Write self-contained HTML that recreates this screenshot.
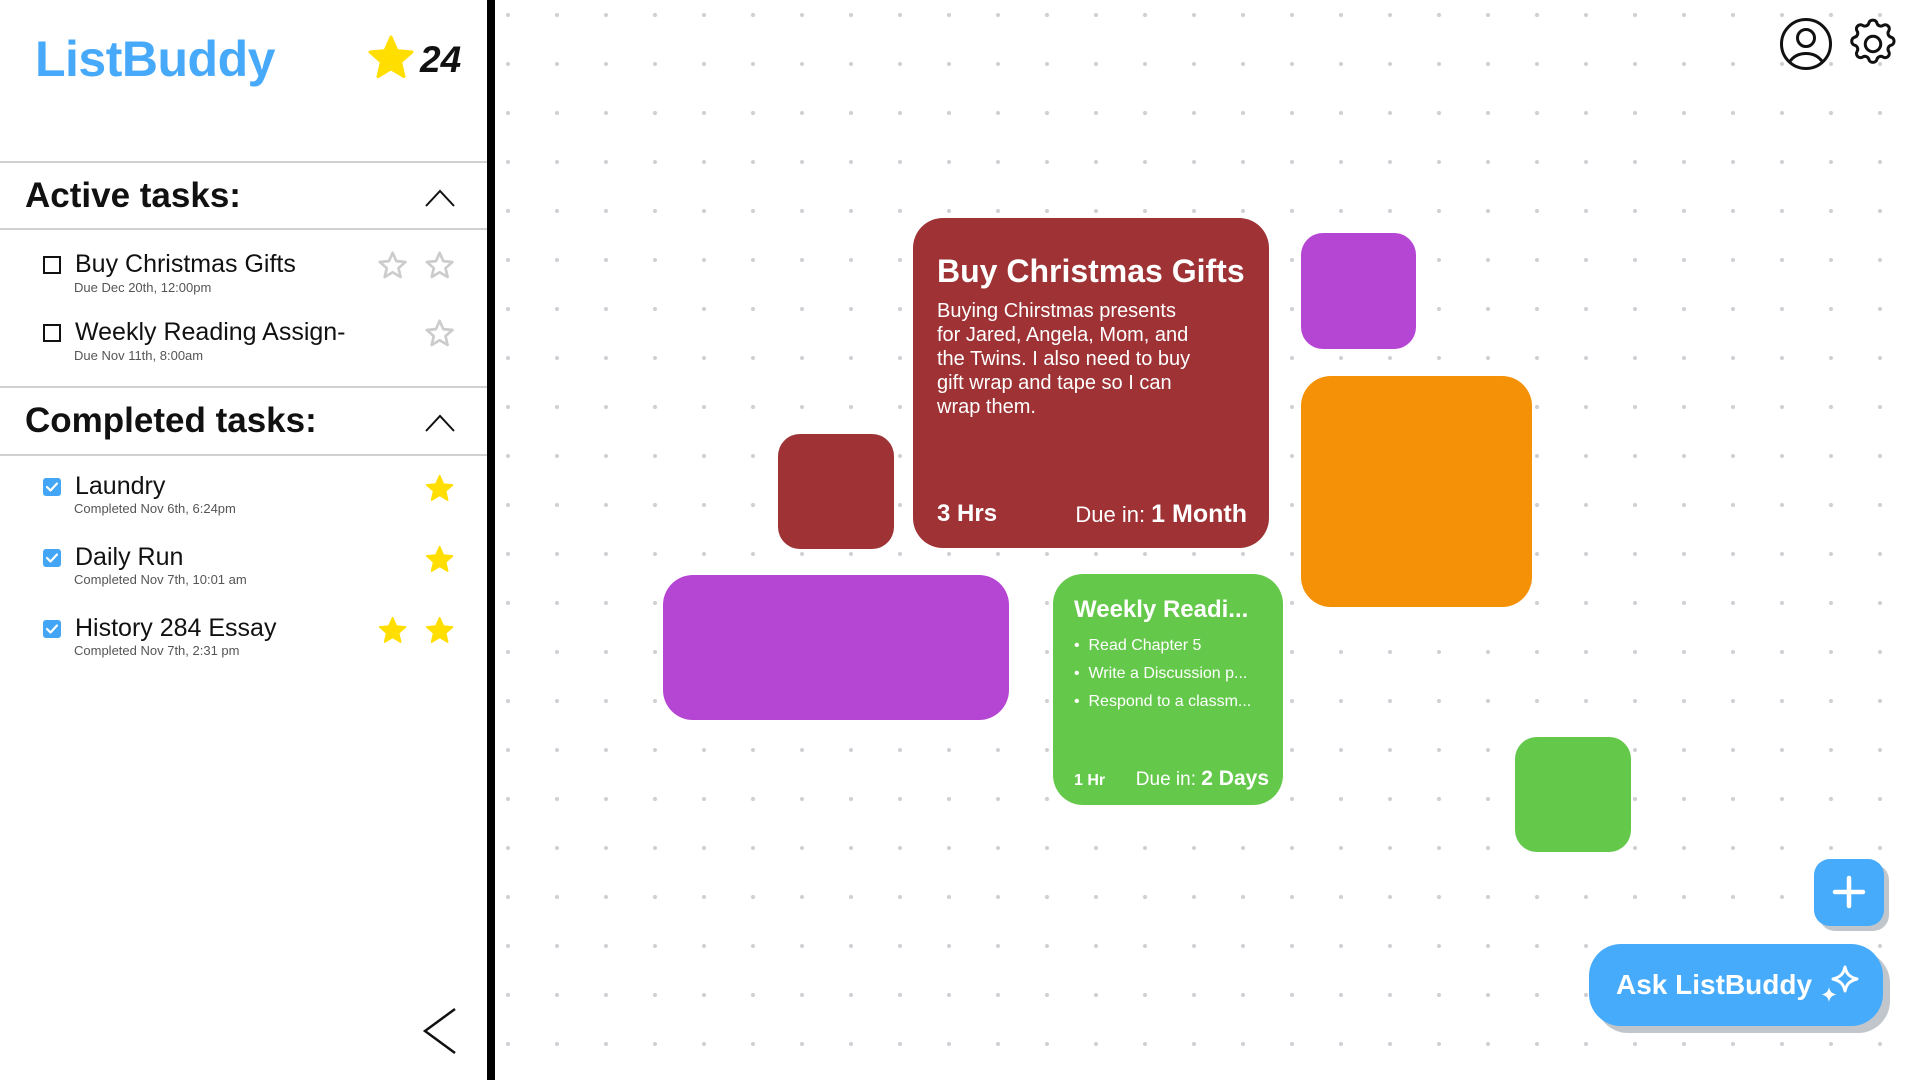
<!DOCTYPE html>
<html><head><meta charset="utf-8"><style>
*{margin:0;padding:0;box-sizing:border-box}
body{width:1920px;height:1080px;overflow:hidden;position:relative;font-family:"Liberation Sans",sans-serif;background:#fff;
background-image:radial-gradient(circle at 24.5px 24.5px,#cfd0d4 1.8px,transparent 2.3px);background-size:49px 49px;background-position:-6.5px -9.5px}
.a{position:absolute;white-space:nowrap}
#side{position:absolute;left:0;top:0;width:487px;height:1080px;background:#fff}
#bar{position:absolute;left:487px;top:0;width:8px;height:1080px;background:#000}
.hl{position:absolute;left:0;width:487px;height:2px;background:#d0d0d0}
.t{font-size:25px;line-height:25px;color:#111}
.s{font-size:13px;line-height:13px;color:#555}
.h{font-size:35px;line-height:35px;font-weight:bold;color:#111}
.cb{position:absolute;width:18px;height:18px;border:2.5px solid #111}
.cc{position:absolute;width:18px;height:18px;border-radius:3px;background:#42a5f5}
.card{position:absolute;border-radius:30px}
</style></head><body>
<div id="side">
<div class="a" style="left:35px;top:34px;font-size:50px;line-height:50px;font-weight:bold;color:#47a9fa;letter-spacing:-0.5px">ListBuddy</div>
<svg class="a" style="left:366px;top:34px" width="50" height="46" viewBox="0 0 24 23"><polygon points="12,1.5 15,8.3 22.5,9 16.8,14 18.5,21.3 12,17.4 5.5,21.3 7.2,14 1.5,9 9,8.3" fill="#ffde00" stroke="#ffde00" stroke-width="1.5" stroke-linejoin="round"/></svg>
<div class="a" style="left:420px;top:41px;font-size:37px;line-height:37px;font-style:italic;font-weight:bold;color:#111">24</div>
<div class="hl" style="top:161px"></div>
<div class="a h" style="left:25px;top:178px">Active tasks:</div>
<svg class="a" style="left:424px;top:188px" width="32" height="20"><polyline points="2,18 16,3 30,18" fill="none" stroke="#111" stroke-width="2"/></svg>
<div class="hl" style="top:228px"></div>
<div class="cb" style="left:43px;top:256px"></div>
<div class="a t" style="left:75px;top:252px">Buy Christmas Gifts</div>
<div class="a s" style="left:74px;top:281px">Due Dec 20th, 12:00pm</div>
<div class="cb" style="left:43px;top:324px"></div>
<div class="a t" style="left:75px;top:320px">Weekly Reading Assign-</div>
<div class="a s" style="left:74px;top:349px">Due Nov 11th, 8:00am</div>
<div class="hl" style="top:386px"></div>
<div class="a h" style="left:25px;top:403px">Completed tasks:</div>
<svg class="a" style="left:424px;top:413px" width="32" height="20"><polyline points="2,18 16,3 30,18" fill="none" stroke="#111" stroke-width="2"/></svg>
<div class="hl" style="top:454px"></div>
<div class="cc" style="left:43px;top:478px"></div>
<div class="a t" style="left:75px;top:474px">Laundry</div>
<div class="a s" style="left:74px;top:502px">Completed Nov 6th, 6:24pm</div>
<div class="cc" style="left:43px;top:549px"></div>
<div class="a t" style="left:75px;top:545px">Daily Run</div>
<div class="a s" style="left:74px;top:573px">Completed Nov 7th, 10:01 am</div>
<div class="cc" style="left:43px;top:620px"></div>
<div class="a t" style="left:75px;top:616px">History 284 Essay</div>
<div class="a s" style="left:74px;top:644px">Completed Nov 7th, 2:31 pm</div>
<svg class="a" style="left:0;top:0" width="487" height="1080">
<defs>
<polygon id="st" points="12,1.5 15,8.3 22.5,9 16.8,14 18.5,21.3 12,17.4 5.5,21.3 7.2,14 1.5,9 9,8.3" stroke-linejoin="round"/>
<polyline id="ck" points="4,9 7.5,12.5 14,5.5" fill="none" stroke="#fff" stroke-width="2.2" stroke-linecap="round" stroke-linejoin="round"/>
</defs>
<g fill="none" stroke="#ccc" stroke-width="2.2">
<use href="#st" transform="translate(378,251) scale(1.22)"/>
<use href="#st" transform="translate(425,251) scale(1.22)"/>
<use href="#st" transform="translate(425,319) scale(1.22)"/>
</g>
<g fill="#ffde00" stroke="#ffde00" stroke-width="1.5">
<use href="#st" transform="translate(425,474) scale(1.22)"/>
<use href="#st" transform="translate(425,545) scale(1.22)"/>
<use href="#st" transform="translate(378,616) scale(1.22)"/>
<use href="#st" transform="translate(425,616) scale(1.22)"/>
</g>
<use href="#ck" transform="translate(43,478)"/>
<use href="#ck" transform="translate(43,549)"/>
<use href="#ck" transform="translate(43,620)"/>
<polyline points="455,1009 425,1031 455,1053" fill="none" stroke="#111" stroke-width="2.5"/>
</svg>
</div>
<div id="bar"></div>

<svg class="a" style="left:1778px;top:16px" width="56" height="56" viewBox="0 0 56 56" fill="none" stroke="#111" stroke-width="3">
<circle cx="28" cy="28" r="24.5"/><circle cx="28" cy="22" r="8.5"/><path d="M11.5 46c4-6 10-8.5 16.5-8.5s12.5 2.5 16.5 8.5"/></svg>
<svg class="a" style="left:1843px;top:15px" width="60" height="58" viewBox="0 0 24 24" fill="none" stroke="#111" stroke-width="1.25" stroke-linejoin="round">
<path d="M10.3 3.3c.4-1.6 2.9-1.6 3.3 0a1.7 1.7 0 0 0 2.6 1c1.5-.9 3.2.8 2.3 2.3a1.7 1.7 0 0 0 1 2.6c1.6.4 1.6 2.9 0 3.3a1.7 1.7 0 0 0-1 2.6c.9 1.5-.8 3.2-2.3 2.3a1.7 1.7 0 0 0-2.6 1c-.4 1.6-2.9 1.6-3.3 0a1.7 1.7 0 0 0-2.6-1c-1.500 .9-3.2-.8-2.3-2.3a1.7 1.7 0 0 0-1-2.6c-1.6-.4-1.6-2.9 0-3.3a1.7 1.7 0 0 0 1-2.6c-.9-1.5.8-3.2 2.3-2.3a1.7 1.7 0 0 0 2.600-1z"/><circle cx="12" cy="12" r="3.2"/></svg>

<div class="card" style="left:913px;top:218px;width:356px;height:330px;background:#9e3234">
<div class="a" style="left:24px;top:37px;font-size:32px;line-height:32px;font-weight:bold;color:#fff">Buy Christmas Gifts</div>
<div class="a" style="left:24px;top:81px;font-size:20px;line-height:24px;color:#fff;white-space:normal;width:300px">Buying Chirstmas presents<br>for Jared, Angela, Mom, and<br>the Twins. I also need to buy<br>gift wrap and tape so I can<br>wrap them.</div>
<div class="a" style="left:24px;top:284px;font-size:24px;line-height:24px;font-weight:bold;color:#fff">3 Hrs</div>
<div class="a" style="right:22px;top:284px;font-size:22px;line-height:24px;color:#fff">Due in: <b style="font-size:25px">1 Month</b></div>
</div>
<div class="card" style="left:778px;top:434px;width:116px;height:115px;background:#9e3234;border-radius:22px"></div>
<div class="card" style="left:1301px;top:233px;width:115px;height:116px;background:#b546d3;border-radius:22px"></div>
<div class="card" style="left:1301px;top:376px;width:231px;height:231px;background:#f59106"></div>
<div class="card" style="left:663px;top:575px;width:346px;height:145px;background:#b546d3"></div>
<div class="card" style="left:1515px;top:737px;width:116px;height:115px;background:#64c94a;border-radius:22px"></div>
<div class="card" style="left:1053px;top:574px;width:230px;height:231px;background:#64c94a">
<div class="a" style="left:21px;top:24px;font-size:24px;line-height:24px;font-weight:bold;color:#fff">Weekly Readi...</div>
<div class="a" style="left:21px;top:58px;font-size:16px;line-height:28px;color:#fff">&bull;&nbsp; Read Chapter 5<br>&bull;&nbsp; Write a Discussion p...<br>&bull;&nbsp; Respond to a classm...</div>
<div class="a" style="left:21px;top:197px;font-size:16px;line-height:20px;font-weight:bold;color:#fff">1 Hr</div>
<div class="a" style="right:14px;top:195px;font-size:19px;line-height:20px;color:#fff">Due in: <b style="font-size:21px">2 Days</b></div>
</div>

<div class="a" style="left:1819px;top:864px;width:70px;height:67px;border-radius:16px;background:#c0c6cc"></div>
<div class="a" style="left:1814px;top:859px;width:70px;height:67px;border-radius:16px;background:#47abfb">
<svg width="70" height="67"><path d="M35 19v28M21 33h28" stroke="#fff" stroke-width="4.5" stroke-linecap="round"/></svg></div>
<div class="a" style="left:1596px;top:951px;width:294px;height:82px;border-radius:32px;background:#c0c6cc"></div>
<div class="a" style="left:1589px;top:944px;width:294px;height:82px;border-radius:32px;background:#47abfb">
<div class="a" style="left:27px;top:27px;font-size:28px;line-height:28px;font-weight:bold;color:#fff">Ask ListBuddy</div>
<svg class="a" style="left:228px;top:20px" width="44" height="44" viewBox="0 0 44 44">
<path d="M28 3c1.5 7 4.5 10 12 12-7.5 2-10.5 5-12 12-1.5-7-4.5-10-12-12 7.5-2 10.5-5 12-12z" fill="none" stroke="#fff" stroke-width="3" stroke-linejoin="round"/>
<path d="M12 23c.8 4.5 2.8 6.5 7.5 7.5-4.7 1-6.7 3-7.5 7.5-.8-4.5-2.8-6.5-7.5-7.5 4.7-1 6.7-3 7.5-7.5z" fill="#fff"/></svg>
</div>
</body></html>
